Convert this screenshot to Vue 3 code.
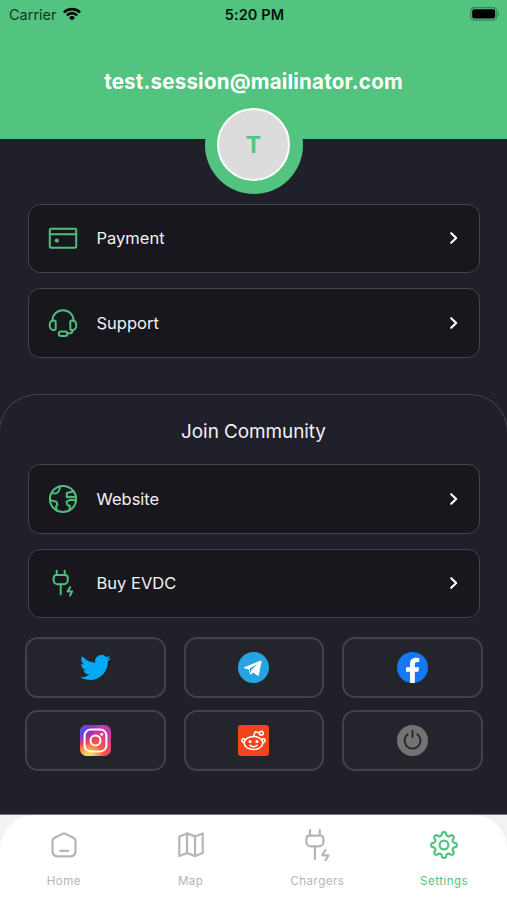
<template>
  <div class="screen">
    <header class="header">
      <div class="status">
        <div class="carrier">
          <span>Carrier</span>
          <svg width="18" height="14" viewBox="0 0 18 14">
            <path d="M0 4.4a13 13 0 0 1 18 0l-1.8 1.9a10.4 10.4 0 0 0-14.4 0z" />
            <path d="M3 7.4a8.6 8.6 0 0 1 12 0l-1.8 1.9a6 6 0 0 0-8.4 0z" />
            <path d="M6 10.5a4.3 4.3 0 0 1 6 0L9 13.6z" />
          </svg>
        </div>
        <span class="time">5:20 PM</span>
        <div class="battery">
          <svg width="30" height="14" viewBox="0 0 30 14">
            <rect x="0.7" y="0.7" width="26" height="12.4" rx="3.6" fill="none" stroke="#35875a" stroke-width="1.2" />
            <rect x="2.2" y="2.2" width="23" height="9.4" rx="2" />
            <path d="M28 4.7c1.7.6 1.7 3.8 0 4.4z" fill="#35875a" />
          </svg>
        </div>
      </div>
      <div class="email">{{ email }}</div>
      <div class="ring">
        <div class="avatar">T</div>
      </div>
    </header>

    <main class="account">
      <button v-for="row in accountRows" :key="row.label" class="row">
        <svg class="row-icon" width="30" height="30" viewBox="0 0 30 30">
          <path v-for="d in row.paths" :key="d" :d="d" />
          <circle v-if="row.dot" class="dot" cx="8.8" cy="17.6" r="2.1" />
        </svg>
        <span>{{ row.label }}</span>
        <svg class="chevron" width="10" height="14" viewBox="0 0 10 14"><path d="M2.2 2.2 7.2 7 2.2 11.8" /></svg>
      </button>
    </main>

    <section class="community">
      <h2>Join Community</h2>
      <div class="links">
        <button v-for="row in communityRows" :key="row.label" class="row">
          <svg class="row-icon" width="30" height="30" viewBox="0 0 30 30">
            <path v-for="d in row.paths" :key="d" :d="d" />
          </svg>
          <span>{{ row.label }}</span>
          <svg class="chevron" width="10" height="14" viewBox="0 0 10 14"><path d="M2.2 2.2 7.2 7 2.2 11.8" /></svg>
        </button>
      </div>

      <div class="social">
        <button class="tile">
          <svg width="31" height="31" viewBox="0 0 24 24">
            <path fill="#03a9f4" d="M23.95 4.57a10 10 0 0 1-2.82.77 4.96 4.96 0 0 0 2.16-2.72c-.95.55-2 .95-3.13 1.18a4.92 4.92 0 0 0-8.38 4.48C7.69 8.1 4.07 6.13 1.64 3.16a4.82 4.82 0 0 0-.67 2.48c0 1.7.87 3.21 2.19 4.1a4.9 4.9 0 0 1-2.23-.62v.06a4.92 4.92 0 0 0 3.95 4.83 5 5 0 0 1-2.21.08 4.94 4.94 0 0 0 4.6 3.42A9.87 9.87 0 0 1 0 19.54a13.99 13.99 0 0 0 7.55 2.21c9.05 0 14-7.5 14-13.98 0-.21 0-.42-.02-.63a9.94 9.94 0 0 0 2.42-2.57z" />
          </svg>
        </button>
        <button class="tile">
          <svg width="31" height="31" viewBox="0 0 31 31">
            <circle cx="15.5" cy="15.5" r="15.5" fill="#28a4e2" />
            <path fill="#fff" d="M6.2 15.3 22.2 8.8c.9-.3 1.5.1 1.3 1.2l-2.6 12.7c-.2 1-.9 1.2-1.7.7l-4.1-3-2.1 2c-.4.4-.8.3-.9-.3l-1.4-4.5-4.3-1.3c-.9-.3-.9-.8-.2-1z" />
            <path fill="#28a4e2" d="m11.3 17 8.2-5.2-6.2 6.4-.6 3z" />
          </svg>
        </button>
        <button class="tile">
          <svg width="31" height="31" viewBox="0 0 31 31">
            <circle cx="15.5" cy="15.5" r="15.5" fill="#1877f2" />
            <path fill="#fff" d="M13 30.8V19.8H9v-4.5h4v-3.4c0-4 2.3-6.2 5.9-6.2 1.7 0 3.3.3 3.3.3v3.9h-1.9c-1.9 0-2.5 1.2-2.5 2.4v3h4.3l-.7 4.5h-3.6v11a16 16 0 0 1-4.8 0z" />
          </svg>
        </button>
        <button class="tile">
          <svg width="31" height="31" viewBox="0 0 31 31">
            <defs>
              <radialGradient id="insta" cx="0.27" cy="1.05" r="1">
                <stop offset="0" stop-color="#ffdd55" />
                <stop offset="0.15" stop-color="#ffd255" />
                <stop offset="0.5" stop-color="#ff543e" />
                <stop offset="1" stop-color="#c837ab" />
              </radialGradient>
              <radialGradient id="instaBlue" cx="-0.1" cy="0" r="0.75">
                <stop offset="0.1" stop-color="#3771c8" />
                <stop offset="0.35" stop-color="#5a4bea" />
                <stop offset="1" stop-color="#6600ff" stop-opacity="0" />
              </radialGradient>
            </defs>
            <rect width="31" height="31" rx="6.5" fill="url(#insta)" />
            <rect width="31" height="31" rx="6.5" fill="url(#instaBlue)" />
            <g fill="none" stroke="#fff" stroke-width="2">
              <rect x="4.6" y="4.6" width="21.8" height="21.8" rx="6" />
              <circle cx="15.5" cy="15.5" r="5" />
            </g>
            <circle cx="21.8" cy="9.4" r="1.4" fill="#fff" />
          </svg>
        </button>
        <button class="tile">
          <svg width="31" height="31" viewBox="0 0 31 31">
            <rect width="31" height="31" rx="3.2" fill="#f4431f" />
            <g fill="none" stroke="#fff" stroke-width="1.5" stroke-linecap="round" stroke-linejoin="round">
              <ellipse cx="15.5" cy="18" rx="9.3" ry="6.6" />
              <path d="M7 14.9c-.3-1.9-3.5-1.5-3.1.8.1.9.9 1.7 2.2 2M24 14.9c.3-1.9 3.5-1.5 3.1.8-.1.9-.9 1.7-2.2 2" />
              <path d="m15.6 11.3 1.6-4.5 4.2 1" />
              <circle cx="23.3" cy="8.2" r="1.9" />
              <path d="M11.8 20.3c1.9 1.8 5.5 1.8 7.4 0" />
            </g>
            <circle cx="12" cy="16.5" r="1.5" fill="#fff" />
            <circle cx="19" cy="16.5" r="1.5" fill="#fff" />
          </svg>
        </button>
        <button class="tile">
          <svg width="31" height="31" viewBox="0 0 31 31">
            <circle cx="15.5" cy="15.5" r="15.5" fill="#737373" />
            <path d="M10.7 9.3a8 8 0 1 0 9.6 0M15.5 5.6v6.6" fill="none" stroke="#24242c" stroke-width="1.8" stroke-linecap="round" />
          </svg>
        </button>
      </div>
    </section>

    <nav class="tabs">
      <div class="tabs-inner">
        <a v-for="tab in tabs" :key="tab.label" class="tab" :class="{ active: tab.active }">
          <svg width="36" height="36" viewBox="0 0 36 36">
            <path v-for="d in tab.paths" :key="d" :d="d" />
            <circle v-if="tab.active" cx="18" cy="18" r="4.4" />
          </svg>
          <span>{{ tab.label }}</span>
        </a>
      </div>
    </nav>
  </div>
</template>

<script setup>
const email = 'test.session@mailinator.com'

const accountRows = [
  {
    label: 'Payment',
    dot: true,
    paths: ['M2.8 5.8h24.4a1 1 0 0 1 1 1v17a1 1 0 0 1-1 1H2.8a1 1 0 0 1-1-1v-17a1 1 0 0 1 1-1z', 'M1.8 11.3h26.4']
  },
  {
    label: 'Support',
    paths: [
      'M4.5 13v-.8a10.5 10 0 0 1 21 0v.8',
      'M4.8 12.5h1.400a1.500 1.500 0 0 1 1.500 1.500v6.500a1.500 1.500 0 0 1-1.500 1.500h-1c-2 0-3.500-2-3.500-4.700s1.400-4.800 3.100-4.800z',
      'M25.200 12.500h-1.400a1.500 1.500 0 0 0-1.500 1.500v6.500a1.500 1.500 0 0 0 1.500 1.500h1c2 0 3.500-2 3.500-4.700s-1.400-4.800-3.100-4.800z',
      'M24.600 22c0 2-.8 3.300-2.800 3.300h-2.600',
      'M13 23.600h4.200a2.200 2.200 0 0 1 0 4.400H13a2.200 2.200 0 0 1 0-4.400z'
    ]
  }
]

const communityRows = [
  {
    label: 'Website',
    paths: [
      'M15 1.9a13.100 13.100 0 1 1 0 26.200 13.100 13.100 0 0 1 0-26.200z',
      'M4.200 8.800c2.300 1.300 5 .5 6.300-1.300 1.100-1.500 1.600-3 1.300-5',
      'M2.200 16.300l6.300 1.500 1 3-1.500 1.600.8 4.300',
      'M25.600 7.600l-6.800 1.400v4.200l3.500-.4 5.500.4',
      'M27.900 16.300l-6.100-.5-3.300 2 .8 3 2.700 1.200-.6 4.400'
    ]
  },
  {
    label: 'Buy EVDC',
    paths: [
      'M8.700 2.800v4M16.700 2.800v4',
      'M8.600 7h8.200a3 3 0 0 1 3 3v2.300a4 4 0 0 1-4 4H9.600a4 4 0 0 1-4-4V10a3 3 0 0 1 3-3z',
      'M12.700 16.500v9.800',
      'M22.200 19.200l-2.600 4.200h4.600l-2.200 4.200'
    ]
  }
]

// eight rounded teeth, one pointing straight up
const gearPath = () => {
  const points = []
  for (let i = 0; i < 160; i++) {
    const a = (i / 160) * Math.PI * 2
    const r = 11.2 + 1.7 * Math.tanh(1.8 * Math.cos(8 * a))
    points.push(`${(18 + r * Math.sin(a)).toFixed(2)} ${(18 - r * Math.cos(a)).toFixed(2)}`)
  }
  return `M${points.join('L')}z`
}

const tabs = [
  {
    label: 'Home',
    paths: ['M16.700 6.700 8.300 11c-1.100.6-1.800 1.500-1.800 2.800v10c0 3.300 1.800 5.500 5 5.500h13c3.200 0 5-2.200 5-5.500v-10c0-1.300-.7-2.200-1.800-2.800L19.300 6.700c-.9-.4-1.700-.4-2.600 0z', 'M14.200 23.800h8']
  },
  {
    label: 'Map',
    paths: ['M6.300 9.500 14 6.400l8 3 7.700-3v19.500L22 29l-8-3-7.700 3z', 'M14 6.400v19.600M22 9.400v19.600']
  },
  {
    label: 'Chargers',
    paths: [
      'M11 3v5.200M20.800 3v5.200',
      'M10.400 8.600h11a3 3 0 0 1 3 3v3.100a4.600 4.600 0 0 1-4.600 4.600H12a4.600 4.600 0 0 1-4.600-4.600v-3.100a3 3 0 0 1 3-3z',
      'M15.900 19.500v12.300',
      'M26.400 23l-3.100 5.300h6.200l-2.800 5'
    ]
  },
  { label: 'Settings', active: true, paths: [gearPath()] }
]
</script>

<style>
body {
  margin: 0;
}
</style>

<style scoped>
.screen {
  width: 507px;
  height: 900px;
  display: flex;
  flex-direction: column;
  overflow: hidden;
  background: #20202a;
  color: #f1f1f3;
  font-family: Inter, 'Liberation Sans', sans-serif;
}
button {
  margin: 0;
  padding: 0;
  color: inherit;
  font-family: inherit;
}
.header {
  height: 138.5px;
  flex: none;
  display: flex;
  flex-direction: column;
  align-items: center;
  background: #52c480;
}
.status {
  width: 100%;
  height: 28px;
  flex: none;
  display: grid;
  grid-template-columns: 1fr auto 1fr;
  align-items: center;
  box-sizing: border-box;
  padding: 0 7px 0 9px;
  color: #04130a;
  font-size: 14.5px;
}
.carrier {
  display: flex;
  align-items: center;
  gap: 6px;
  color: #123822;
  letter-spacing: 0;
}
.carrier svg {
  fill: #000;
}
.time {
  font-weight: 600;
  letter-spacing: 0.1px;
}
.battery {
  display: flex;
  justify-content: flex-end;
}
.email {
  margin-top: 39px;
  height: 30px;
  line-height: 30px;
  color: #fff;
  font-size: 20.5px;
  font-weight: 700;
  letter-spacing: 0.22px;
  white-space: nowrap;
}
.ring {
  width: 98px;
  height: 98px;
  flex: none;
  margin-top: -1.5px;
  display: flex;
  align-items: center;
  justify-content: center;
  border-radius: 50%;
  background: #52c480;
}
.avatar {
  width: 69px;
  height: 69px;
  border: 2.5px solid #fff;
  border-radius: 50%;
  background: #dcdcdc;
  color: #52c480;
  font-size: 23px;
  font-weight: 700;
  line-height: 70px;
  text-align: center;
}
.account {
  display: flex;
  flex-direction: column;
  gap: 15px;
  padding: 65px 27px 0 28px;
}
.row {
  display: flex;
  align-items: center;
  box-sizing: border-box;
  height: 69.5px;
  padding: 0 20px 0 18.5px;
  border: 1px solid #44444e;
  border-radius: 12px;
  background: #18171d;
  font-size: 16.5px;
}
.row span {
  flex: 1;
  margin-left: 19px;
  text-align: left;
}
.row-icon {
  fill: none;
  stroke: #4fbd7c;
  stroke-width: 2;
  stroke-linecap: round;
  stroke-linejoin: round;
}
.row-icon .dot {
  fill: #4fbd7c;
  stroke: none;
}
.chevron {
  fill: none;
  stroke: #fff;
  stroke-width: 2.1;
  stroke-linecap: round;
  stroke-linejoin: round;
}
.community {
  flex: 1;
  margin: 36px -1px 0;
  border: 1px solid #44444e;
  border-bottom: 0;
  border-radius: 38px 38px 0 0;
}
h2 {
  margin: 25px 0 0;
  line-height: 24px;
  font-size: 18.9px;
  font-weight: 400;
  letter-spacing: -0.05px;
  text-align: center;
}
.links {
  display: flex;
  flex-direction: column;
  gap: 15px;
  margin: 20.5px 27px 0 28px;
}
.social {
  display: grid;
  grid-template-columns: repeat(3, 1fr);
  gap: 12px 18px;
  margin: 18.5px 24px 0 25px;
}
.tile {
  display: flex;
  align-items: center;
  justify-content: center;
  box-sizing: border-box;
  height: 61px;
  border: 2px solid #42424c;
  border-radius: 13px;
  background: #24242c;
}
.tabs {
  height: 86px;
  flex: none;
  box-sizing: border-box;
  border-top: 1px solid #77777d;
  background: #f2f2f3;
}
.tabs-inner {
  display: grid;
  grid-template-columns: repeat(4, 1fr);
  height: 100%;
  border-radius: 34px 34px 0 0;
  background: #fff;
}
.tab {
  display: flex;
  flex-direction: column;
  align-items: center;
  padding: 12px 0 0 1px;
  color: #b5b5b5;
  font-size: 11.5px;
  letter-spacing: 0.5px;
}
.tab svg {
  fill: none;
  stroke: currentColor;
  stroke-width: 2.2;
  stroke-linecap: round;
  stroke-linejoin: round;
}
.tab span {
  margin-top: 10px;
  line-height: 16px;
}
.tab.active {
  color: #52c480;
}
</style>
